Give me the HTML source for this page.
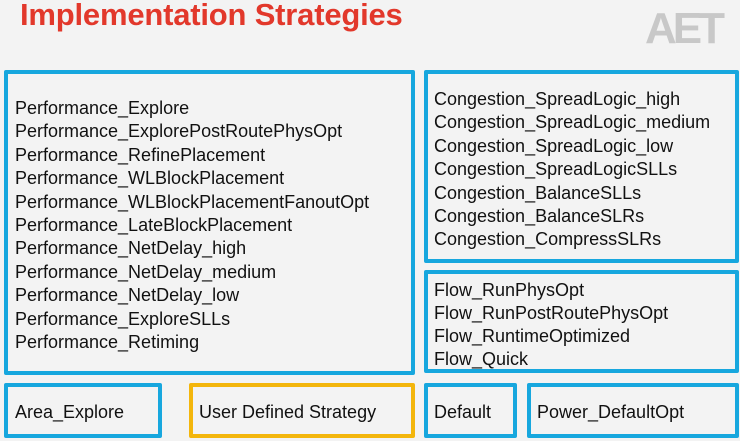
<!DOCTYPE html><html><head><style>
body{margin:0;width:740px;height:441px;background:#f3f3f3;position:relative;overflow:hidden;font-family:"Liberation Sans",sans-serif}
.t{position:absolute;left:20px;top:-3px;font-size:31px;font-weight:bold;color:#e2382b;letter-spacing:-0.2px}
.logo{position:absolute;left:645px;top:4px;font-size:44px;font-weight:bold;color:#c8c8c8;letter-spacing:-4px}
.b{position:absolute;border:4px solid #17a7de;box-sizing:border-box;border-radius:2px;font-size:18px;color:#111;line-height:23.4px}
.y{border-color:#f3b60c}
</style></head><body>
<div class="t">Implementation Strategies</div>
<div class="logo">AET</div>
<div class="b" style="left:4px;top:70px;width:411px;height:305px;padding:23px 0 0 7px">Performance_Explore<br>Performance_ExplorePostRoutePhysOpt<br>Performance_RefinePlacement<br>Performance_WLBlockPlacement<br>Performance_WLBlockPlacementFanoutOpt<br>Performance_LateBlockPlacement<br>Performance_NetDelay_high<br>Performance_NetDelay_medium<br>Performance_NetDelay_low<br>Performance_ExploreSLLs<br>Performance_Retiming</div>
<div class="b" style="left:424px;top:70px;width:315px;height:193px;padding:14px 0 0 6px">Congestion_SpreadLogic_high<br>Congestion_SpreadLogic_medium<br>Congestion_SpreadLogic_low<br>Congestion_SpreadLogicSLLs<br>Congestion_BalanceSLLs<br>Congestion_BalanceSLRs<br>Congestion_CompressSLRs</div>
<div class="b" style="left:424px;top:270px;width:315px;height:103px;padding:5px 0 0 6px;line-height:23px">Flow_RunPhysOpt<br>Flow_RunPostRoutePhysOpt<br>Flow_RuntimeOptimized<br>Flow_Quick</div>
<div class="b" style="left:4px;top:383px;width:158px;height:55px;padding:14px 0 0 7px">Area_Explore</div>
<div class="b y" style="left:189px;top:383px;width:226px;height:55px;padding:14px 0 0 6px">User Defined Strategy</div>
<div class="b" style="left:424px;top:383px;width:93px;height:55px;padding:14px 0 0 6px">Default</div>
<div class="b" style="left:527px;top:383px;width:212px;height:55px;padding:14px 0 0 6px">Power_DefaultOpt</div>
</body></html>
